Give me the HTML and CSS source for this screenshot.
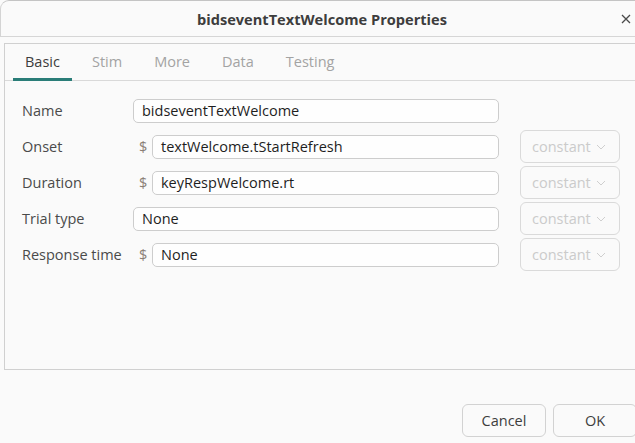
FILE: index.html
```html
<!DOCTYPE html>
<html lang="en">
<head>
    <meta charset="UTF-8">
    <meta name="viewport" content="width=device-width, initial-scale=1.0">
    <title>bidseventTextWelcome Properties</title>
    <link rel="stylesheet" href="styles.css">
</head>
<body>
    <div class="window">
        <header class="titlebar">
            <h1>bidseventTextWelcome Properties</h1>
            <button class="close-btn" aria-label="Close">
                <svg width="10" height="10" viewBox="0 0 10 10">
                    <path d="M1 1 L9 9 M9 1 L1 9" stroke="#4a4a4a" stroke-width="1.3" fill="none"/>
                </svg>
            </button>
        </header>

        <section class="panel">
            <nav class="tabs">
                <span class="tab active">Basic</span>
                <span class="tab">Stim</span>
                <span class="tab">More</span>
                <span class="tab">Data</span>
                <span class="tab">Testing</span>
            </nav>

            <div class="form">
                <!-- Name -->
                <label class="field-label">Name</label>
                <div class="input wide">bidseventTextWelcome</div>
                <span></span>

                <!-- Onset -->
                <label class="field-label">Onset</label>
                <span class="dollar">$</span>
                <div class="input">textWelcome.tStartRefresh</div>
                <div class="select">constant <svg width="10" height="6" viewBox="0 0 10 6"><path d="M1 1 L5 5 L9 1" stroke="#cfcfcf" stroke-width="1" fill="none"/></svg></div>

                <!-- Duration -->
                <label class="field-label">Duration</label>
                <span class="dollar">$</span>
                <div class="input">keyRespWelcome.rt</div>
                <div class="select">constant <svg width="10" height="6" viewBox="0 0 10 6"><path d="M1 1 L5 5 L9 1" stroke="#cfcfcf" stroke-width="1" fill="none"/></svg></div>

                <!-- Trial type -->
                <label class="field-label">Trial type</label>
                <div class="input wide">None</div>
                <div class="select">constant <svg width="10" height="6" viewBox="0 0 10 6"><path d="M1 1 L5 5 L9 1" stroke="#cfcfcf" stroke-width="1" fill="none"/></svg></div>

                <!-- Response time -->
                <label class="field-label">Response time</label>
                <span class="dollar">$</span>
                <div class="input">None</div>
                <div class="select">constant <svg width="10" height="6" viewBox="0 0 10 6"><path d="M1 1 L5 5 L9 1" stroke="#cfcfcf" stroke-width="1" fill="none"/></svg></div>
            </div>
        </section>

        <footer class="actions">
            <button class="btn">Cancel</button>
            <button class="btn">OK</button>
        </footer>
    </div>
</body>
</html>
```

FILE: styles.css
```css
:root {
    --bg: #fafafa;
    --border: #d0d0d0;
    --text: #3d3d3d;
    --muted: #a3a3a3;
    --accent: #2a7d78;
}

* {
    box-sizing: border-box;
    margin: 0;
    padding: 0;
}

body {
    font-family: 'Open Sans', 'Noto Sans', sans-serif;
    font-size: 14.5px;
    color: var(--text);
    background: var(--bg);
    width: 635px;
    height: 443px;
    overflow: hidden;
}

.window {
    width: 645px;
    height: 443px;
    background: var(--bg);
}

/* Title bar */
.titlebar {
    position: relative;
    height: 37px;
    display: flex;
    align-items: center;
    justify-content: center;
    border-top: 1px solid #c4c4c4;
    border-left: 1px solid #d4d4d4;
    border-top-left-radius: 9px;
    border-bottom: 1px solid #d6d6d6;
}

.titlebar h1 {
    font-size: 14.6px;
    font-weight: 700;
    color: var(--text);
    margin-left: -2px;
}

.close-btn {
    position: absolute;
    right: 14px;
    top: 13px;
    border: none;
    background: none;
    width: 10px;
    height: 10px;
    display: flex;
}

/* Tab panel */
.panel {
    margin: 6px 0 0 4px;
    height: 327px;
    border: 1px solid var(--border);
    background: var(--bg);
}

.tabs {
    display: flex;
    gap: 8px;
    padding-left: 8px;
    height: 37px;
    border-bottom: 1px solid #d9d9d9;
}

.tab {
    padding: 0 12px;
    display: flex;
    align-items: center;
    color: var(--muted);
    border-bottom: 3px solid transparent;
    margin-bottom: -1px;
    padding-top: 1px;
}

.tab.active {
    color: var(--text);
    border-bottom-color: var(--accent);
}

/* Form grid */
.form {
    display: grid;
    grid-template-columns: 111px 19px 347px 121px;
    grid-auto-rows: 33px;
    row-gap: 3px;
    padding: 13px 0 0 17px;
    align-items: center;
}

.field-label {
    color: #4a4a4a;
}

.dollar {
    color: #8a7f76;
    padding-left: 6px;
}

.input {
    height: 24px;
    border: 1px solid #cdcdcd;
    border-radius: 5px;
    background: #fefefe;
    padding: 0 8px;
    display: flex;
    align-items: center;
    color: #1e1e1e;
}

.input.wide {
    grid-column: 2 / 4;
}

.select {
    justify-self: end;
    width: 100px;
    height: 33px;
    border: 1px solid #dadada;
    border-radius: 6px;
    display: flex;
    align-items: center;
    gap: 5px;
    padding-left: 11px;
    color: #cbcbcb;
}

/* Dialog buttons */
.actions {
    display: flex;
    justify-content: flex-end;
    gap: 7px;
    padding: 34px 8px 0 0;
}

.btn {
    width: 84px;
    height: 33px;
    border: 1px solid #d2d2d2;
    border-radius: 6px;
    background: var(--bg);
    font-family: inherit;
    font-size: 14.5px;
    color: var(--text);
}
```
